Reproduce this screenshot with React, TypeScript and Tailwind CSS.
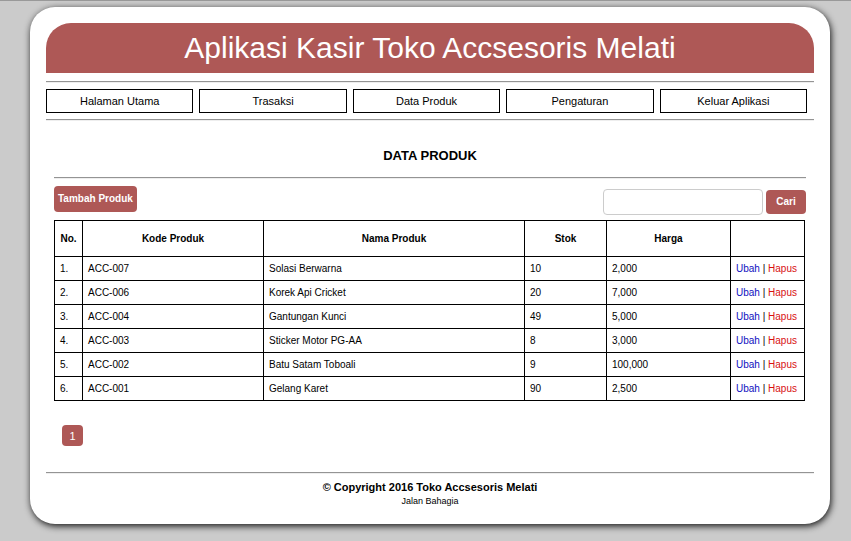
const menu = ["Halaman Utama", "Trasaksi", "Data Produk", "Pengaturan", "Keluar Aplikasi"];

const products = [
  { code: "ACC-007", name: "Solasi Berwarna", stock: 10, price: "2,000" },
  { code: "ACC-006", name: "Korek Api Cricket", stock: 20, price: "7,000" },
  { code: "ACC-004", name: "Gantungan Kunci", stock: 49, price: "5,000" },
  { code: "ACC-003", name: "Sticker Motor PG-AA", stock: 8, price: "3,000" },
  { code: "ACC-002", name: "Batu Satam Toboali", stock: 9, price: "100,000" },
  { code: "ACC-001", name: "Gelang Karet", stock: 90, price: "2,500" },
];

function Rule() {
  return <hr className="h-[2px] border-t border-b border-t-[#949494] border-b-[#eeeeee]" />;
}

function ProductTable() {
  return (
    <table className="w-full table-fixed border-collapse border border-black text-[10px] leading-4">
      <colgroup>
        <col className="w-7" />
        <col className="w-[181px]" />
        <col />
        <col className="w-[82px]" />
        <col className="w-[124px]" />
        <col className="w-[74px]" />
      </colgroup>
      <thead>
        <tr className="h-9">
          {["No.", "Kode Produk", "Nama Produk", "Stok", "Harga", ""].map((title) => (
            <th key={title} className="border border-black font-bold">
              {title}
            </th>
          ))}
        </tr>
      </thead>
      <tbody>
        {products.map((product, index) => (
          <tr key={product.code} className="h-6">
            <td className="border border-black px-[5px]">{index + 1}.</td>
            <td className="border border-black px-[5px]">{product.code}</td>
            <td className="border border-black px-[5px]">{product.name}</td>
            <td className="border border-black px-[5px]">{product.stock}</td>
            <td className="border border-black px-[5px]">{product.price}</td>
            <td className="whitespace-nowrap border border-black px-[5px]">
              <a href="#ubah" className="text-[#1010c0]">Ubah</a> |{" "}
              <a href="#hapus" className="text-[#d81010]">Hapus</a>
            </td>
          </tr>
        ))}
      </tbody>
    </table>
  );
}

export default function App() {
  return (
    <div className="min-h-screen border-t border-[#999999] bg-[#cbcbcb] pt-[6px] pb-4 pl-[9px] font-['Liberation_Sans',Arial,sans-serif] text-black">
      <div className="mx-auto w-full max-w-[800px] rounded-[25px] bg-white p-4 shadow-[1px_2px_7px_#111111]">
        <header className="mb-2 flex h-[50px] items-center justify-center rounded-t-[25px] bg-[#ae5856]">
          <h1 className="text-[30px] leading-8 text-white">Aplikasi Kasir Toko Accsesoris Melati</h1>
        </header>
        <Rule />
        <nav className="flex gap-[6px] py-[6px] pr-[7px]">
          {menu.map((item) => (
            <a
              key={item}
              href="#menu"
              className="flex h-6 flex-1 items-center justify-center border border-black text-[11px] leading-4"
            >
              {item}
            </a>
          ))}
        </nav>
        <Rule />

        <main className="px-2 pt-[26px] pb-[26px]">
          <h2 className="mb-3 text-center text-[13px] leading-[18px] font-bold">DATA PRODUK</h2>
          <Rule />
          <div className="flex items-start justify-between pt-[7px] pb-[5px]">
            <button type="button" className="h-[26px] rounded bg-[#ae5856] px-1 text-[10px] leading-4 font-bold text-white">
              Tambah Produk
            </button>
            <form className="flex items-center gap-[3px] pt-[3px]" onSubmit={(event) => event.preventDefault()}>
              <input
                type="text"
                aria-label="Cari produk"
                className="h-[26px] w-40 rounded border border-[#cccccc] bg-white px-2 text-[11px]"
              />
              <button type="submit" className="h-6 w-10 rounded bg-[#ae5856] text-[10px] leading-4 font-bold text-white">
                Cari
              </button>
            </form>
          </div>
          <div className="pr-px">
            <ProductTable />
          </div>
          <div className="flex px-2 pt-6">
            <a
              href="#halaman-1"
              className="flex size-[21px] items-center justify-center rounded bg-[#ae5856] text-[11px] leading-4 text-white"
            >
              1
            </a>
          </div>
        </main>

        <Rule />
        <footer className="pt-[5px] text-center">
          <p className="text-[11px] leading-4 font-bold">© Copyright 2016 Toko Accsesoris Melati</p>
          <p className="text-[9px] leading-[13px]">Jalan Bahagia</p>
        </footer>
      </div>
    </div>
  );
}
